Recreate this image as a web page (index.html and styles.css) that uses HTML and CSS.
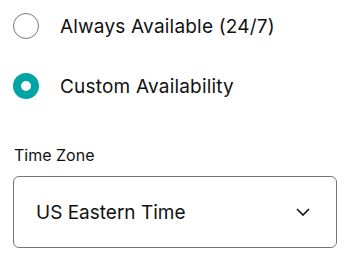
FILE: index.html
```html
<!DOCTYPE html>
<html>
<head>
<meta charset="utf-8">
<link rel="stylesheet" href="styles.css">
</head>
<body>
<div class="form">
  <div class="options">
    <label class="option">
      <span class="radio"></span>
      <span class="option-text">Always Available (24/7)</span>
    </label>
    <label class="option">
      <span class="radio checked"></span>
      <span class="option-text">Custom Availability</span>
    </label>
  </div>
  <div class="field">
    <div class="field-label">Time Zone</div>
    <div class="select">
      <span class="select-value">US Eastern Time</span>
      <svg class="chevron" width="14" height="8" viewBox="0 0 14 8"><path d="M1 1 L7 7 L13 1" fill="none" stroke="#111" stroke-width="1.6"/></svg>
    </div>
  </div>
</div>
</body>
</html>
```
FILE: styles.css
```css
html, body {
  margin: 0;
  padding: 0;
  background: #fff;
}
body {
  font-family: "Inter", "Liberation Sans", sans-serif;
  color: #111;
}
.form {
  padding: 13px 13px 0 13px;
  display: flex;
  flex-direction: column;
}
.options {
  display: flex;
  flex-direction: column;
  gap: 34px;
}
.option {
  display: flex;
  align-items: center;
  gap: 21px;
  height: 26px;
}
.radio {
  box-sizing: border-box;
  width: 26px;
  height: 26px;
  border-radius: 50%;
  border: 1.5px solid #777;
  flex: none;
}
.radio.checked {
  border: 8px solid #00a4a6;
}
.option-text {
  font-size: 19px;
  letter-spacing: 0.2px;
}
.field {
  margin-top: 46px;
}
.field-label {
  font-size: 16px;
  padding-left: 1px;
  line-height: 20px;
  margin-bottom: 11px;
}
.select {
  box-sizing: border-box;
  width: 324px;
  height: 72px;
  border: 1px solid #767676;
  border-radius: 6px;
  display: flex;
  align-items: center;
  justify-content: space-between;
  padding: 0 26px 0 22px;
}
.select-value {
  font-size: 19px;
}
```
